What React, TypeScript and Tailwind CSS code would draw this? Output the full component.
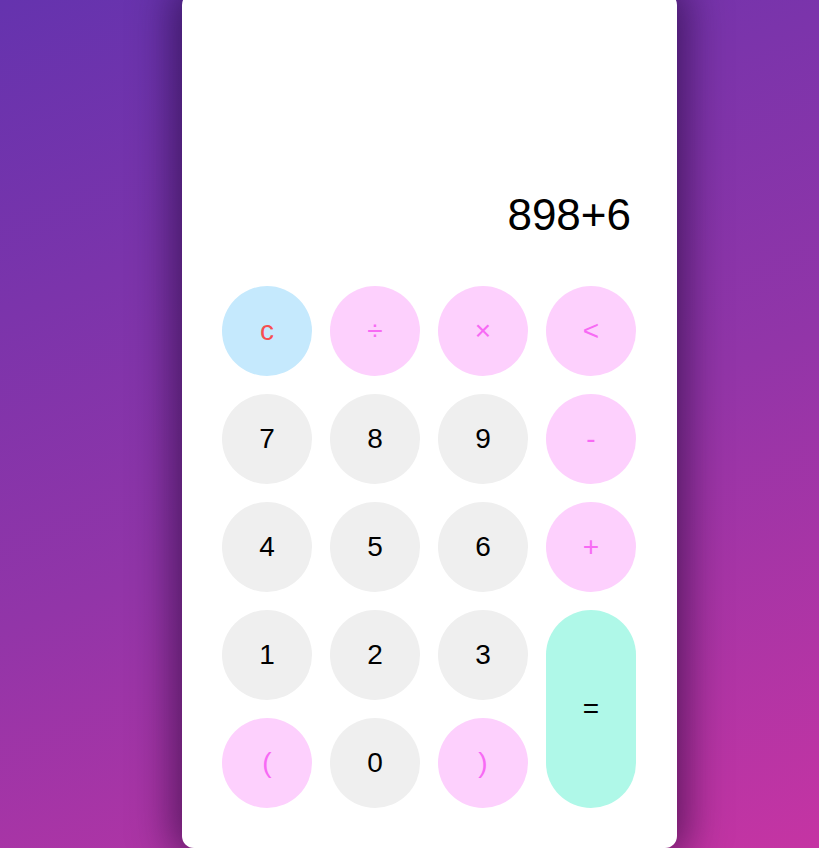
import React from "react";

type Btn = { label: string; cls: string; tall?: boolean };

const pink = "bg-[#fdd0fd] text-[#f76af4]";
const gray = "bg-[#efefef] text-black";

const buttons: Btn[] = [
  { label: "c", cls: "bg-[#c5e9fd] text-[#f64e50]" },
  { label: "÷", cls: pink },
  { label: "×", cls: pink },
  { label: "<", cls: pink },
  { label: "7", cls: gray },
  { label: "8", cls: gray },
  { label: "9", cls: gray },
  { label: "-", cls: pink },
  { label: "4", cls: gray },
  { label: "5", cls: gray },
  { label: "6", cls: gray },
  { label: "+", cls: pink },
  { label: "1", cls: gray },
  { label: "2", cls: gray },
  { label: "3", cls: gray },
  { label: "=", cls: "bg-[#aff8e8] text-black row-span-2", tall: true },
  { label: "(", cls: pink },
  { label: "0", cls: gray },
  { label: ")", cls: pink },
];

export default function App() {
  return (
    <div
      className="h-[848px] w-full overflow-hidden bg-[linear-gradient(160deg,#6533ae_0%,#9235a8_55%,#c534a3_100%)]"
      style={{ fontFamily: '"Liberation Sans", Arial, sans-serif' }}
    >
      <div className="ml-[182px] -mt-[7px] flex h-[855px] w-[495px] flex-col justify-end rounded-[12px] bg-white px-[40px] pb-[40px] shadow-[0_0_40px_10px_rgba(20,0,40,0.55)]">
        <div className="mb-[46px] pr-[6px] text-right text-[44px] leading-[50px] text-black">
          898+6
        </div>
        <div className="grid grid-cols-[repeat(4,90px)] auto-rows-[90px] gap-[18px]">
          {buttons.map((b) => (
            <button
              key={b.label}
              className={`flex items-center justify-center rounded-full text-[28px] leading-none ${b.cls}`}
            >
              {b.label}
            </button>
          ))}
        </div>
      </div>
    </div>
  );
}
